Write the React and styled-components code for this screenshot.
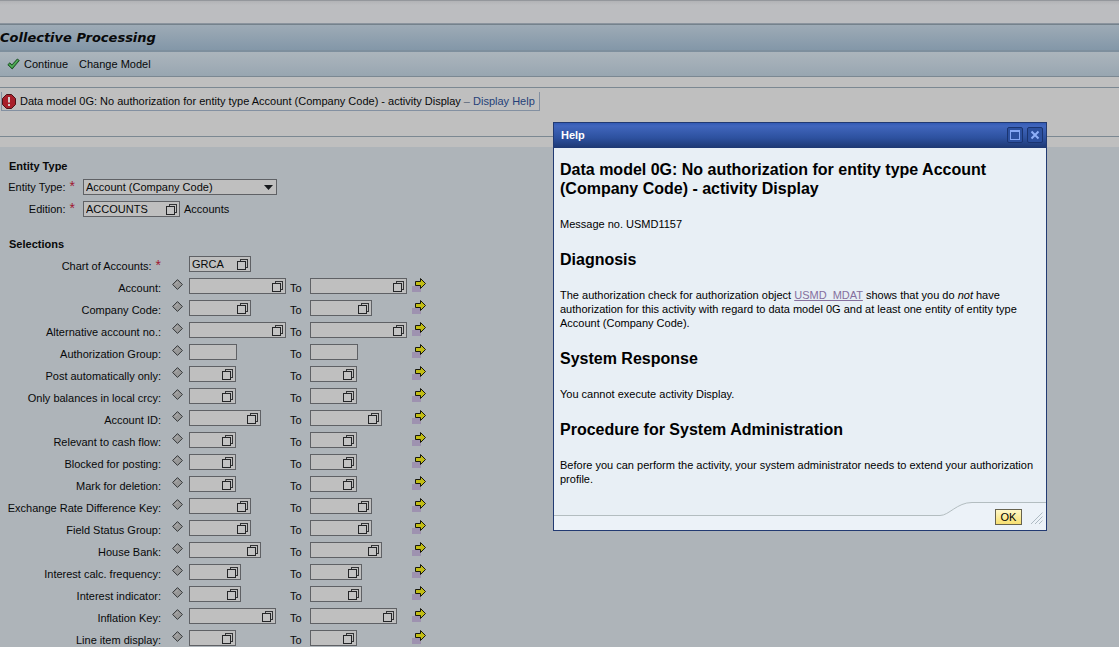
import React from "react";
import styled, { createGlobalStyle } from "styled-components";

const GlobalStyle = createGlobalStyle`
  * { box-sizing: border-box; }
  body {
    margin: 0;
    background: #aeb4b9;
    color: #08090a;
    font: 11px/14px "Liberation Sans", Arial, sans-serif;
  }
  button, input, select { font: inherit; color: inherit; }
`;

const Page = styled.div`
  height: 100vh;
  overflow: hidden;
  background: #aeb4b9;
`;

const TopStrip = styled.div`
  height: 24px;
  border-top: 1px solid #94979c;
  border-bottom: 1px solid #8b949e;
  background: linear-gradient(#b2b3b6, #bcbdc0 4px, #bcbdc0);
`;

const TitleBar = styled.header`
  height: 28px;
  display: flex;
  align-items: center;
  border-top: 1px solid #75828c;
  border-bottom: 2px solid #7e8f9d;
  background: linear-gradient(#9eabb6, #8397a8);
`;

const Title = styled.h1`
  margin: 0;
  font: italic bold 13px/20px "DejaVu Sans", Verdana, sans-serif;
`;

const Toolbar = styled.nav`
  height: 25px;
  display: flex;
  align-items: center;
  gap: 11px;
  padding-left: 7px;
  border-bottom: 1px solid #7b8892;
  background: linear-gradient(#acb5bc, #98a6b1);
`;

const ToolButton = styled.button`
  display: flex;
  align-items: center;
  gap: 4px;
  padding: 0;
  border: 0;
  background: none;
`;

const MessageArea = styled.section`
  height: 70px;
  padding-top: 10px;
  border-bottom: 10px solid #bfbfbf;
  background: #bfbfbf;
`;

const MessagePanel = styled.div`
  height: 50px;
  padding: 4px 1px;
  border-top: 1px solid #7b8892;
  border-bottom: 1px solid #7b8892;
`;

const Message = styled.div`
  display: inline-flex;
  align-items: center;
  height: 19px;
  padding-right: 4px;
  border: 1px solid #8390a1;
  border-top: 0;
  white-space: pre;

  svg { margin-right: 3px; }
`;

const HelpLink = styled.a`
  color: #253f78;
  text-decoration: none;
`;

const Dash = styled.span`
  color: #5b6678;
`;

const Form = styled.form`
  padding-top: 12px;
`;

const GroupTitle = styled.h2`
  margin: 0 0 0 9px;
  font-size: 11px;
  line-height: 14px;
`;

const HeaderRow = styled.div`
  display: grid;
  grid-template-columns: 75px auto auto 1fr;
  align-items: center;
  height: 22px;
`;

const HeaderRows = styled.div`
  margin: 3px 0 17px;
`;

const HeaderLabel = styled.label`
  text-align: right;
`;

const Required = styled.span`
  margin-left: 4px;
  color: #a01830;
  font-size: 14px;
  line-height: 10px;
`;

const FieldOffset = styled.div`
  margin-left: 8px;
`;

const FieldNote = styled.span`
  margin-left: 4px;
`;

const SelectBox = styled.div`
  display: grid;
  align-items: center;
  width: 194px;
  height: 16px;
  border: 1px solid #5f6165;
  background: #bfbfbf;

  > * { grid-area: 1 / 1; }
  svg { justify-self: end; margin-right: 3px; pointer-events: none; }
`;

const Select = styled.select`
  appearance: none;
  width: 100%;
  height: 14px;
  padding: 0 2px;
  border: 0;
  outline: 0;
  background: transparent;
`;

const SelectionRows = styled.div`
  margin-top: 2px;
`;

const SelectionRow = styled.div`
  display: grid;
  grid-template-columns: 161px 28px 101px 20px 102px 14px;
  align-items: center;
  height: 22px;
`;

const SelectionLabel = styled.label`
  padding-top: 4px;
  text-align: right;
`;

const ToLabel = styled.label`
  padding-top: 4px;
`;

const IconButton = styled.button`
  display: flex;
  justify-content: center;
  padding: 0;
  border: 0;
  background: none;
`;

const OptionButton = styled(IconButton)`
  padding: 0 0 3px 4px;
`;

const MoreButton = styled(IconButton)`
  padding-bottom: 2px;
`;

const FieldBox = styled.div`
  display: flex;
  align-items: center;
  width: ${(p) => p.$width}px;
  height: 16px;
  padding-right: 2px;
  border: 1px solid #5f6165;
  background: #bfbfbf;
`;

const FieldInput = styled.input`
  flex: 1;
  min-width: 0;
  height: 14px;
  padding: 0 2px;
  border: 0;
  outline: 0;
  background: transparent;
`;

const Dialog = styled.section`
  position: absolute;
  top: 122px;
  left: 553px;
  width: 494px;
  border: 1px solid #223a72;
  background: #e8eff5;
  color: #000;
`;

const DialogBar = styled.header`
  display: flex;
  align-items: center;
  gap: 4px;
  height: 25px;
  padding: 0 3px 2px 7px;
  background: linear-gradient(#335ab4, #4166bd 3px, #2d519f 60%, #1d3872);
  color: #fff;
`;

const DialogTitle = styled.h2`
  flex: 1;
  margin: 0;
  font-size: 11px;
  line-height: 14px;
`;

const WindowButton = styled.button`
  display: flex;
  align-items: center;
  justify-content: center;
  width: 16px;
  height: 16px;
  padding: 0;
  border: 1px solid #1a3470;
  border-radius: 2px;
  background: #2c509f;
`;

const DialogBody = styled.div`
  padding: 12px 6px 13px;
`;

const HelpHeading = styled.h3`
  margin: 0 0 19px;
  font-size: 16px;
  line-height: 19px;
`;

const HelpText = styled.p`
  margin: 0 0 19px;

  &:last-child { margin-bottom: 0; }
`;

const ObjectLink = styled.a`
  color: #85709e;
`;

const DialogFooter = styled.footer`
  display: flex;
  height: 31px;
`;

const FooterRule = styled.div`
  flex: 1;
  margin-top: 16px;
  border-top: 1px solid #b3bdc0;
  background: #ecf2f8;
`;

const FooterActions = styled.div`
  display: flex;
  justify-content: flex-end;
  gap: 6px;
  width: 74px;
  margin-top: 3px;
  padding: 6px 3px 0 0;
  border-top: 1px solid #b3bdc0;
  background: #ecf2f8;
`;

const OkButton = styled.button`
  width: 27px;
  height: 16px;
  padding: 0;
  border: 1px solid #66624e;
  background: linear-gradient(#fff8c8, #f7df70);
  line-height: 14px;
`;

const CheckIcon = () => (
  <svg width="13" height="12" viewBox="0 0 13 12" aria-hidden="true">
    <path d="M.8 6.700 2.900 4.800l2 2.200L10.300 1l2 1.500L5.200 11Z" fill="#3b9b43" stroke="#17471e" strokeWidth=".9" />
    <path d="M2.500 6.600 5 8.800l5.600-6.500" fill="none" stroke="#5fb066" strokeWidth="1" />
  </svg>
);

const ErrorIcon = () => (
  <svg width="15" height="15" viewBox="0 0 15 15" aria-hidden="true">
    <path d="M4.500.5h5l4 4v6l-4 4h-5l-4-4v-6Z" fill="#a81f2a" stroke="#4c1116" />
    <path d="M6 3h2v5.500H6ZM6 10h2v2H6Z" fill="#d6cccc" />
  </svg>
);

const ValueHelpIcon = () => (
  <svg width="11" height="11" viewBox="0 0 11 11" aria-hidden="true" shapeRendering="crispEdges">
    <path d="M3.500 2.500v-2h7v8h-2" fill="none" stroke="#333436" />
    <path d="M.5 2.500h8v8h-8Z" fill="#c3c3c3" stroke="#242527" />
  </svg>
);

const DiamondIcon = () => (
  <svg width="11" height="11" viewBox="0 0 11 11" aria-hidden="true">
    <path d="M5.500.6 10.400 5.500 5.500 10.400.6 5.500Z" fill="#989898" stroke="#34373a" />
    <path d="M3 5.500 5.500 3" stroke="#b2b2b2" />
  </svg>
);

const ArrowIcon = () => (
  <svg width="14" height="14" viewBox="0 0 14 14" aria-hidden="true">
    <path d="M0 8h9v6H0Z" fill="#9e92b0" />
    <path d="M3.500 3.500h5v-3l5 5-5 5v-3h-5Z" fill="#c2bd13" stroke="#18180d" />
  </svg>
);

const CaretIcon = () => (
  <svg width="9" height="5" viewBox="0 0 9 5" aria-hidden="true">
    <path d="M0 0h9L4.500 5Z" fill="#17191c" />
  </svg>
);

const MaximizeIcon = () => (
  <svg width="10" height="10" viewBox="0 0 10 10" aria-hidden="true" shapeRendering="crispEdges">
    <path d="M.5.5h9v9h-9ZM0 1.500h10" fill="none" stroke="#86a8f4" />
  </svg>
);

const CloseIcon = () => (
  <svg width="10" height="10" viewBox="0 0 10 10" aria-hidden="true">
    <path d="m1.500 1.500 7 7m0-7-7 7" stroke="#8fb0f8" strokeWidth="2" />
  </svg>
);

const FooterCurve = () => (
  <svg width="32" height="31" viewBox="0 0 32 31" aria-hidden="true">
    <path d="M0 16.500C9 16.500 17 3.500 32 3.500V31H0Z" fill="#ecf2f8" />
    <path d="M0 16.500C9 16.500 17 3.500 32 3.500" fill="none" stroke="#b3bdc0" />
  </svg>
);

const ResizeGrip = () => (
  <svg width="15" height="15" viewBox="0 0 15 15" aria-hidden="true">
    <path d="M.5 17.500l14-14M4.500 17.500l10-10M8.500 17.500l6-6" stroke="#aebbc3" />
  </svg>
);

function Field({ id, width, value = "", help = true, label }) {
  return (
    <FieldBox $width={width}>
      <FieldInput id={id} defaultValue={value} />
      {help && (
        <IconButton type="button" aria-label={`Value help for ${label}`}>
          <ValueHelpIcon />
        </IconButton>
      )}
    </FieldBox>
  );
}

const selections = [
  { label: "Account", width: 97 },
  { label: "Company Code", width: 62 },
  { label: "Alternative account no.", width: 97 },
  { label: "Authorization Group", width: 48, help: false },
  { label: "Post automatically only", width: 47 },
  { label: "Only balances in local crcy", width: 47 },
  { label: "Account ID", width: 72 },
  { label: "Relevant to cash flow", width: 47 },
  { label: "Blocked for posting", width: 47 },
  { label: "Mark for deletion", width: 47 },
  { label: "Exchange Rate Difference Key", width: 62 },
  { label: "Field Status Group", width: 62 },
  { label: "House Bank", width: 72 },
  { label: "Interest calc. frequency", width: 52 },
  { label: "Interest indicator", width: 52 },
  { label: "Inflation Key", width: 87 },
  { label: "Line item display", width: 47 },
];

function RangeRow({ index, label, width, help }) {
  const from = `from-${index}`;
  const to = `to-${index}`;
  return (
    <SelectionRow>
      <SelectionLabel htmlFor={from}>{label}:</SelectionLabel>
      <OptionButton type="button" aria-label={`Selection options for ${label}`}>
        <DiamondIcon />
      </OptionButton>
      <Field id={from} width={width} help={help} label={label} />
      <ToLabel htmlFor={to}>To</ToLabel>
      <Field id={to} width={width} help={help} label={label} />
      <MoreButton type="button" aria-label={`Multiple selection for ${label}`}>
        <ArrowIcon />
      </MoreButton>
    </SelectionRow>
  );
}

function HelpDialog() {
  return (
    <Dialog role="dialog" aria-labelledby="help-title">
      <DialogBar>
        <DialogTitle id="help-title">Help</DialogTitle>
        <WindowButton type="button" aria-label="Maximize"><MaximizeIcon /></WindowButton>
        <WindowButton type="button" aria-label="Close"><CloseIcon /></WindowButton>
      </DialogBar>
      <DialogBody>
        <HelpHeading>Data model 0G: No authorization for entity type Account (Company Code) - activity Display</HelpHeading>
        <HelpText>Message no. USMD1157</HelpText>
        <HelpHeading>Diagnosis</HelpHeading>
        <HelpText>
          The authorization check for authorization object <ObjectLink href="#usmd-mdat">USMD_MDAT</ObjectLink> shows
          that you do <em>not</em> have authorization for this activity with regard to data model 0G and at least one
          entity of entity type Account (Company Code).
        </HelpText>
        <HelpHeading>System Response</HelpHeading>
        <HelpText>You cannot execute activity Display.</HelpText>
        <HelpHeading>Procedure for System Administration</HelpHeading>
        <HelpText>
          Before you can perform the activity, your system administrator needs to extend your authorization profile.
        </HelpText>
      </DialogBody>
      <DialogFooter>
        <FooterRule />
        <FooterCurve />
        <FooterActions>
          <OkButton type="button">OK</OkButton>
          <ResizeGrip />
        </FooterActions>
      </DialogFooter>
    </Dialog>
  );
}

export default function App() {
  return (
    <Page>
      <GlobalStyle />
      <TopStrip />
      <TitleBar>
        <Title>Collective Processing</Title>
      </TitleBar>
      <Toolbar>
        <ToolButton type="button"><CheckIcon />Continue</ToolButton>
        <ToolButton type="button">Change Model</ToolButton>
      </Toolbar>
      <MessageArea>
        <MessagePanel>
          <Message>
            <ErrorIcon />
            <span>Data model 0G: No authorization for entity type Account (Company Code) - activity Display</span>
            <Dash> – </Dash>
            <HelpLink href="#help">Display Help</HelpLink>
          </Message>
        </MessagePanel>
      </MessageArea>
      <Form>
        <GroupTitle>Entity Type</GroupTitle>
        <HeaderRows>
          <HeaderRow>
            <HeaderLabel htmlFor="entity-type">Entity Type:<Required>*</Required></HeaderLabel>
            <FieldOffset>
              <SelectBox>
                <Select id="entity-type"><option>Account (Company Code)</option></Select>
                <CaretIcon />
              </SelectBox>
            </FieldOffset>
          </HeaderRow>
          <HeaderRow>
            <HeaderLabel htmlFor="edition">Edition:<Required>*</Required></HeaderLabel>
            <FieldOffset>
              <Field id="edition" width={97} value="ACCOUNTS" label="Edition" />
            </FieldOffset>
            <FieldNote>Accounts</FieldNote>
          </HeaderRow>
        </HeaderRows>
        <GroupTitle>Selections</GroupTitle>
        <SelectionRows>
          <SelectionRow>
            <SelectionLabel htmlFor="chart">Chart of Accounts:<Required>*</Required></SelectionLabel>
            <span />
            <Field id="chart" width={62} value="GRCA" label="Chart of Accounts" />
          </SelectionRow>
          {selections.map((row, index) => (
            <RangeRow key={row.label} index={index} {...row} />
          ))}
        </SelectionRows>
      </Form>
      <HelpDialog />
    </Page>
  );
}
